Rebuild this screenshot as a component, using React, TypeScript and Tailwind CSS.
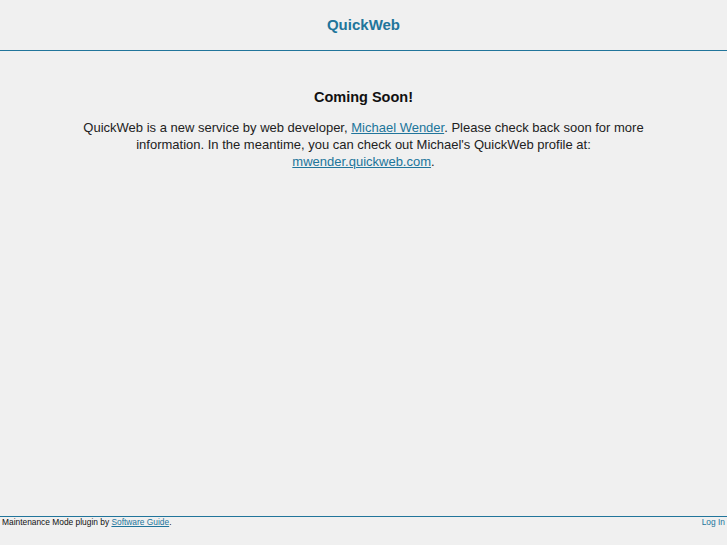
export default function App() {
  return (
    <div
      className="min-h-screen flex flex-col bg-[#f0f0f0] text-[#222]"
      style={{ fontFamily: '"Liberation Sans", Arial, sans-serif' }}
    >
      <header className="h-[51px] flex items-center justify-center border-b border-[#21759b] pb-[2px]">
        <h1 className="text-[15px] font-bold text-[#21759b] leading-none">QuickWeb</h1>
      </header>
      <main className="flex-1">
        <div className="max-w-[600px] mx-auto text-center pt-[38px]">
          <h2 className="text-[14.5px] font-bold leading-[17px] text-[#111]">Coming Soon!</h2>
          <p className="text-[13px] leading-[17px] mt-[13px]">
            QuickWeb is a new service by web developer,{" "}
            <a href="#" className="text-[#21759b] underline">Michael Wender</a>. Please check back soon for more
            information. In the meantime, you can check out Michael's QuickWeb profile at:{" "}
            <a href="#" className="text-[#21759b] underline">mwender.quickweb.com</a>.
          </p>
        </div>
      </main>
      <footer className="h-[29px] border-t border-[#21759b] flex justify-between px-[2px] text-[8.4px] leading-[11px] text-[#111]">
        <span>
          Maintenance Mode plugin by{" "}
          <a href="#" className="text-[#21759b] underline">Software Guide</a>.
        </span>
        <a href="#" className="text-[#21759b]">Log In</a>
      </footer>
    </div>
  );
}
